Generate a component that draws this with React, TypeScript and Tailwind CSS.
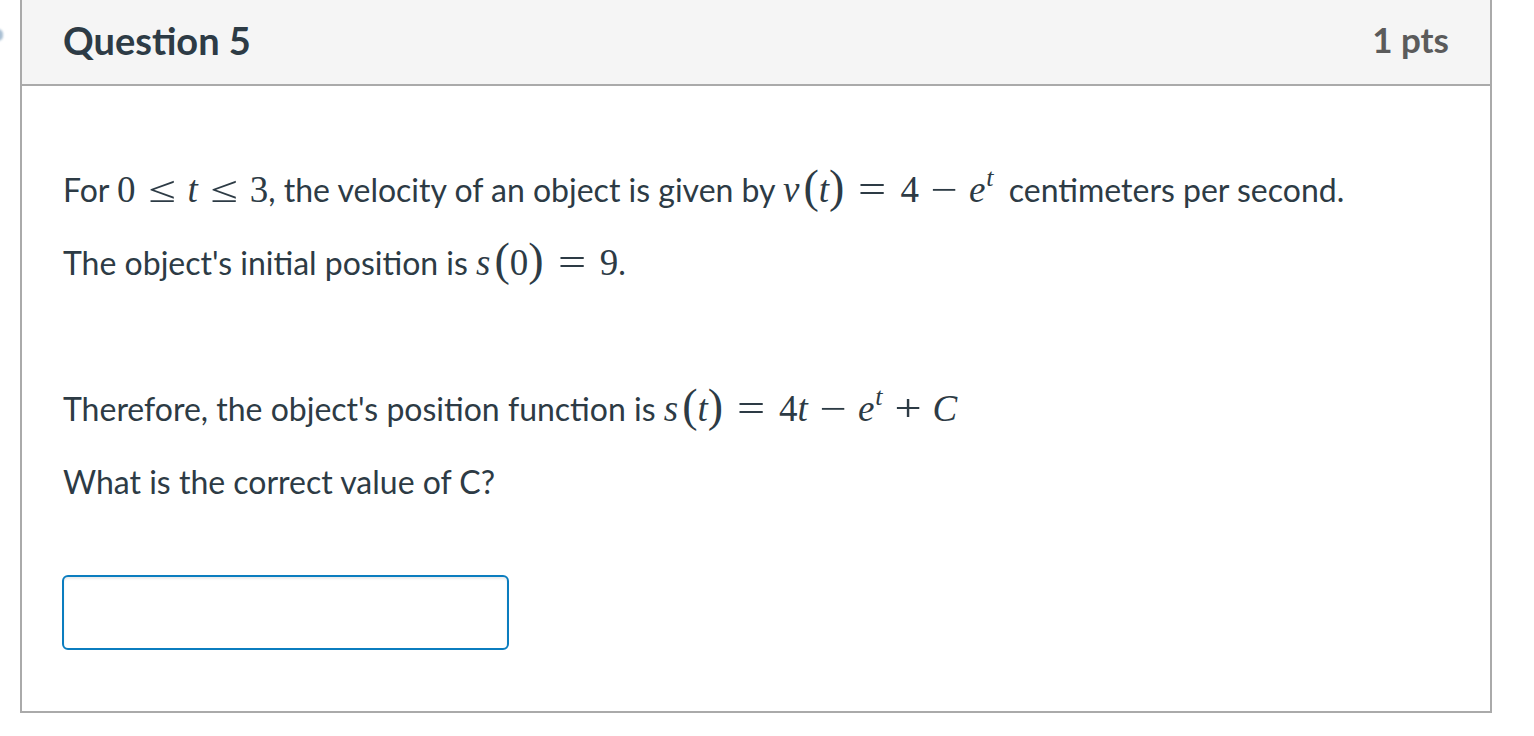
import React from 'react';

// Inline math pieces, set in a serif face to stand in for the TeX fonts
const M: React.FC<{ children: React.ReactNode; className?: string }> = ({ children, className = '' }) => (
  <span
    className={`text-[37px] leading-[0] whitespace-nowrap ${className}`}
    style={{ fontFamily: '"Liberation Serif", "DejaVu Serif", serif' }}
  >
    {children}
  </span>
);

const V: React.FC<{ children: React.ReactNode }> = ({ children }) => <i className="italic">{children}</i>;

// relation (≤, =): wide glyph with thick spacing
const Rel: React.FC<{ children: React.ReactNode; tight?: boolean }> = ({ children, tight }) => (
  <span
    className={`inline-block leading-[0] w-[28px] text-center scale-x-[1.35] ${tight ? 'mx-[12px]' : 'mx-[14px]'}`}
  >
    {children}
  </span>
);

// binary operator (−, +): medium spacing
const Bin: React.FC<{ children: React.ReactNode }> = ({ children }) => (
  <span className="inline-block leading-[0] w-[28px] mx-[11px] text-center scale-x-[1.3]">{children}</span>
);

const L = () => <span className="text-[46px] leading-[0] ml-[4px]">(</span>;
const R = () => <span className="text-[46px] leading-[0]">)</span>;

const Et = () => (
  <>
    <V>e</V>
    <sup className="text-[26px] leading-[0] italic ml-[1px] top-[-16px]">t</sup>
  </>
);

export default function App() {
  return (
    <div className="min-h-screen bg-white relative" style={{ fontFamily: 'Lato, "Noto Sans", sans-serif' }}>
      {/* cut-off flag marker at the page edge */}
      <span className="absolute left-[-7px] top-[29px] w-[10px] h-[12px] rounded-full bg-[#a9bfd3] blur-[1px]" />

      <div className="ml-[20px] w-[1472px] border-2 border-t-0 border-[#aaaaaa] text-[#2d3b45]">
        {/* Header */}
        <header className="h-[86px] bg-[#f5f5f5] border-b-2 border-[#aaaaaa] flex items-center justify-between px-[41px] pb-[5px]">
          <h2 className="text-[38px] font-bold leading-none text-[#2d3b45]">Question 5</h2>
          <span className="text-[35px] font-bold leading-none text-[#5b5b5b]">1 pts</span>
        </header>

        {/* Question body */}
        <div className="pt-[80px] px-[41px] pb-[61px] text-[32px] leading-[48px]">
          <p className="mb-[25px]">
            For{' '}
            <M>
              0<Rel tight>≤</Rel>
              <V>t</V>
              <Rel tight>≤</Rel>3
            </M>
            , the velocity of an object is given by{' '}
            <M className="mr-[7px]">
              <V>v</V>
              <L />
              <V>t</V>
              <R />
              <Rel>=</Rel>4<Bin>−</Bin>
              <Et />
            </M>{' '}
            centimeters per second.
          </p>
          <p className="mb-[25px]">
            The object's initial position is{' '}
            <M>
              <V>s</V>
              <L />0<R />
              <Rel>=</Rel>9
            </M>
            .
          </p>
          <p className="mb-[25px]">&nbsp;</p>
          <p className="mb-[25px]">
            Therefore, the object's position function is{' '}
            <M>
              <V>s</V>
              <L />
              <V>t</V>
              <R />
              <Rel>=</Rel>4<V>t</V>
              <Bin>−</Bin>
              <Et />
              <Bin>+</Bin>
              <V>C</V>
            </M>
          </p>
          <p className="mb-[24px]">What is the correct value of C?</p>

          <div className="pt-[45px] -ml-[1px]">
            <input
              type="text"
              aria-label="Answer"
              className="block w-[447px] h-[75px] rounded-[6px] border-2 border-[#0b7dbf] bg-white shadow-[inset_0_2px_2px_rgba(0,0,0,0.08)] outline-none px-3 text-[32px]"
            />
          </div>
        </div>
      </div>
    </div>
  );
}
